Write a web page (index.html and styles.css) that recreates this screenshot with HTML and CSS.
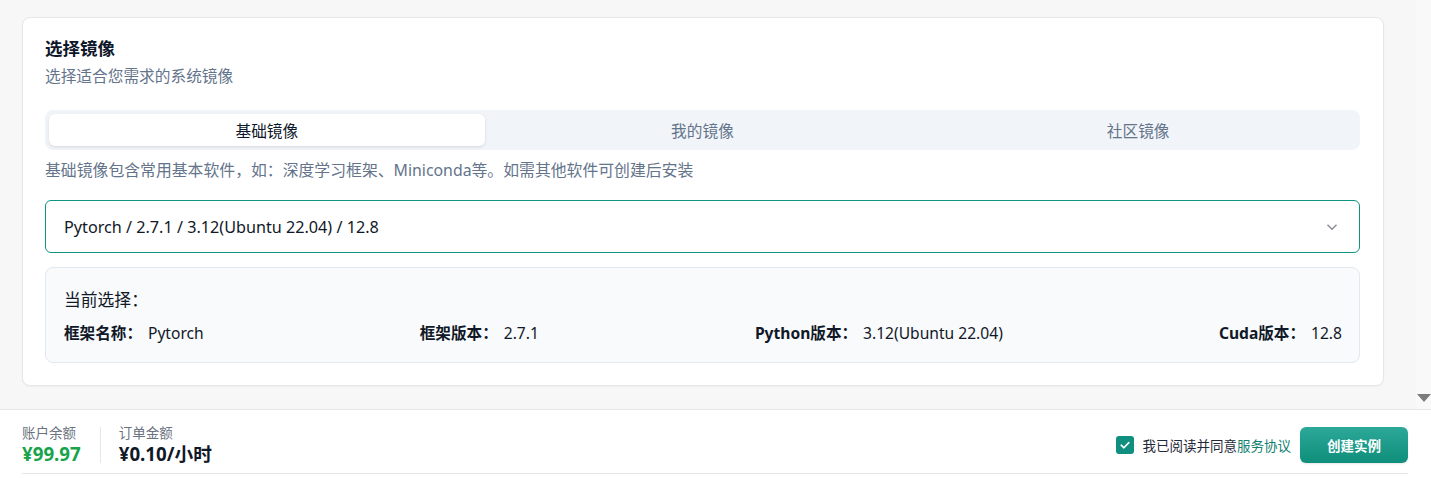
FILE: index.html
```html
<!DOCTYPE html>
<html lang="zh-CN">
<head>
    <meta charset="UTF-8">
    <meta name="viewport" content="width=device-width, initial-scale=1.0">
    <title>选择镜像</title>
    <link rel="stylesheet" href="styles.css">
</head>
<body>
    <div class="app">
        <div class="scroll-area">
            <main class="content">
                <section class="card">
                    <h2 class="card-title">选择镜像</h2>
                    <p class="card-subtitle">选择适合您需求的系统镜像</p>

                    <div class="tabs">
                        <div class="tab active">基础镜像</div>
                        <div class="tab">我的镜像</div>
                        <div class="tab">社区镜像</div>
                    </div>

                    <p class="tab-desc">基础镜像包含常用基本软件，如：深度学习框架、Miniconda等。如需其他软件可创建后安装</p>

                    <div class="select">
                        <span class="select-value">Pytorch / 2.7.1 / 3.12(Ubuntu 22.04) / 12.8</span>
                        <svg class="chevron" width="12" height="12" viewBox="0 0 12 12">
                            <path d="M1.5 3.8 L6 8.3 L10.5 3.8" fill="none" stroke="#8a8d96" stroke-width="1.4"/>
                        </svg>
                    </div>

                    <div class="summary">
                        <div class="summary-title">当前选择：</div>
                        <div class="summary-row">
                            <div class="summary-item"><b>框架名称：</b><span>Pytorch</span></div>
                            <div class="summary-item"><b>框架版本：</b><span>2.7.1</span></div>
                            <div class="summary-item"><b>Python版本：</b><span>3.12(Ubuntu 22.04)</span></div>
                            <div class="summary-item"><b>Cuda版本：</b><span>12.8</span></div>
                        </div>
                    </div>
                </section>
            </main>
            <div class="scrollbar">
                <span class="scroll-arrow"></span>
            </div>
        </div>

        <footer class="footer">
            <div class="footer-inner">
                <div class="amounts">
                    <div class="amount">
                        <div class="amount-label">账户余额</div>
                        <div class="amount-value green">¥99.97</div>
                    </div>
                    <div class="amount-divider"></div>
                    <div class="amount">
                        <div class="amount-label">订单金额</div>
                        <div class="amount-value">¥0.10/小时</div>
                    </div>
                </div>
                <div class="actions">
                    <label class="agree">
                        <span class="checkbox">
                            <svg width="12" height="12" viewBox="0 0 12 12">
                                <path d="M2.2 6.2 L4.9 8.8 L9.8 3.6" fill="none" stroke="#fff" stroke-width="1.6" stroke-linecap="round" stroke-linejoin="round"/>
                            </svg>
                        </span>
                        我已阅读并同意<a class="link">服务协议</a>
                    </label>
                    <button class="btn-primary">创建实例</button>
                </div>
            </div>
        </footer>
    </div>
</body>
</html>
```

FILE: styles.css
```css
* {
    box-sizing: border-box;
}

body {
    margin: 0;
    height: 100vh;
    overflow: hidden;
    background: #f7f7f8;
    color: #111827;
    font-family: "Noto Sans", "Noto Sans CJK SC", sans-serif;
}

.app {
    display: flex;
    flex-direction: column;
    height: 100vh;
}

.scroll-area {
    display: flex;
    height: 409px;
    flex-shrink: 0;
}

.content {
    flex: 1;
    padding: 17px 32px 0 22px;
}

.scrollbar {
    width: 15px;
    background: #f9f9f9;
    position: relative;
}

.scroll-arrow {
    position: absolute;
    left: 1px;
    bottom: 7px;
    width: 0;
    height: 0;
    border-left: 7px solid transparent;
    border-right: 7px solid transparent;
    border-top: 8px solid #7c7c7c;
}

/* main card */
.card {
    background: #fff;
    border: 1px solid #e5e7eb;
    border-radius: 8px;
    padding: 18px 23px 22px 22px;
    box-shadow: 0 1px 2px rgba(0, 0, 0, 0.04);
}

.card-title {
    margin: 0;
    font-size: 17.5px;
    line-height: 24px;
    font-weight: 700;
    color: #0f172a;
}

.card-subtitle {
    margin: 6px 0 0;
    font-size: 15.7px;
    line-height: 20px;
    color: #64748b;
}

.tabs {
    margin-top: 24px;
    display: grid;
    grid-template-columns: 1fr 1fr 1fr;
    padding: 4px;
    background: #f1f5f9;
    border-radius: 8px;
}

.tab {
    height: 32px;
    display: flex;
    align-items: center;
    justify-content: center;
    font-size: 15.7px;
    color: #64748b;
    border-radius: 6px;
}

.tab.active {
    background: #fff;
    color: #0f172a;
    box-shadow: 0 1px 3px rgba(0, 0, 0, 0.12);
}

.tab-desc {
    margin: 10px 0 0;
    font-size: 15.85px;
    line-height: 20px;
    color: #64748b;
}

.select {
    margin-top: 20px;
    height: 53px;
    display: flex;
    align-items: center;
    justify-content: space-between;
    padding: 0 21px 0 18px;
    border: 1px solid #0f9483;
    border-radius: 6px;
    font-size: 16.2px;
    color: #111827;
}

.summary {
    margin-top: 14px;
    background: #f8fafc;
    border: 1px solid #e2e8f0;
    border-radius: 8px;
    padding: 20px 17px 18px 18px;
}

.summary-title {
    font-size: 16.8px;
    line-height: 24px;
    color: #111827;
}

.summary-row {
    margin-top: 10px;
    display: flex;
    justify-content: space-between;
    font-size: 15.6px;
    line-height: 22px;
}

.summary-item b {
    font-weight: 700;
    margin-right: 6px;
    color: #111827;
}

/* footer */
.footer {
    flex: 1;
    background: #fff;
    border-top: 1px solid #e5e7eb;
}

.footer-inner {
    margin: 0 23px 0 22px;
    padding: 14px 0 7px;
    display: flex;
    align-items: center;
    justify-content: space-between;
    border-bottom: 1px solid #e5e7eb;
}

.amounts {
    display: flex;
    align-items: center;
}

.amount-label {
    font-size: 13.5px;
    line-height: 18px;
    color: #6b7280;
}

.amount-value {
    font-size: 18.7px;
    line-height: 24px;
    font-weight: 700;
    color: #111827;
}

.amount-value.green {
    color: #16a34a;
}

.amount-divider {
    width: 1px;
    height: 36px;
    background: #e5e7eb;
    margin: 0 18px 0 19px;
}

.actions {
    display: flex;
    align-items: center;
    gap: 9px;
}

.agree {
    display: flex;
    align-items: center;
    font-size: 13.5px;
    color: #1f2937;
}

.checkbox {
    width: 18px;
    height: 18px;
    border-radius: 3px;
    background: #0f8f7f;
    display: flex;
    align-items: center;
    justify-content: center;
    margin-right: 9px;
}

.link {
    color: #13806f;
}

.btn-primary {
    width: 108px;
    height: 36px;
    border: none;
    border-radius: 6px;
    background: linear-gradient(180deg, #2ca898 0%, #0f8e7b 100%);
    color: #fff;
    font-family: inherit;
    font-size: 13.5px;
    font-weight: 700;
    box-shadow: 0 1px 2px rgba(0, 0, 0, 0.1);
}
```
